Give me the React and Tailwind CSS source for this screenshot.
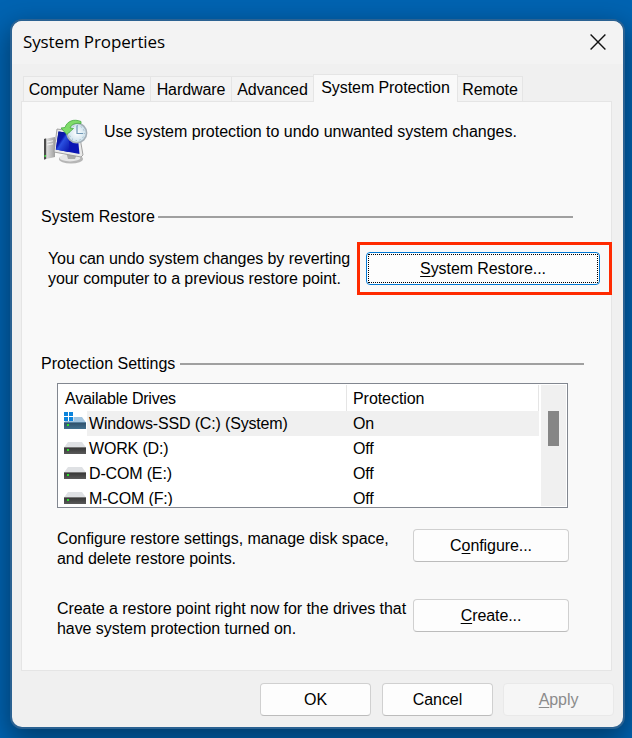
const TABS = [
  { name: "Computer Name", width: "w-[127px]" },
  { name: "Hardware", width: "w-[81px]" },
  { name: "Advanced", width: "w-[82px]" },
  { name: "System Protection", width: "w-[145px]", active: true },
  { name: "Remote", width: "w-[65px]" },
];

const DRIVES = [
  { name: "Windows-SSD (C:) (System)", protection: "On", system: true },
  { name: "WORK (D:)", protection: "Off" },
  { name: "D-COM (E:)", protection: "Off" },
  { name: "M-COM (F:)", protection: "Off" },
];

const CloseIcon = () => (
  <svg width="16" height="16" viewBox="0 0 16 16" fill="none" stroke="#111" strokeWidth="1.4">
    <path d="M0.6 0.6L15.4 15.4M15.4 0.6L0.6 15.4" />
  </svg>
);

const DriveIcon = ({ system }) => (
  <svg width="22" height="25" viewBox="0 0 22 25">
    <defs>
      <linearGradient id="driveDark" x1="0" y1="0" x2="0" y2="1">
        <stop offset="0" stopColor="#333333" />
        <stop offset="1" stopColor="#5a5a5a" />
      </linearGradient>
      <linearGradient id="driveBlue" x1="0" y1="0" x2="0" y2="1">
        <stop offset="0" stopColor="#2c4c66" />
        <stop offset="1" stopColor="#41708f" />
      </linearGradient>
    </defs>
    <path d="M4 6H18L22 11.5H0Z" fill={system ? "#a3c4de" : "#dfe1e4"} />
    <rect y="11" width="22" height="7" fill={system ? "url(#driveBlue)" : "url(#driveDark)"} />
    <rect y="11" width="22" height="1" fill={system ? "#55809f" : "#777777"} />
    <rect x="3" y="13" width="2" height="2" fill="#2be22b" />
    {system && (
      <g>
        <rect width="9.5" height="10" fill="#ffffff" />
        <path d="M0 1H4V5H0ZM5 1H9V5H5ZM0 6H4V10H0ZM5 6H9V10H5Z" fill="#0c84dc" />
      </g>
    )}
  </svg>
);

const RestoreIcon = () => (
  <svg width="46" height="46" viewBox="0 0 46 46">
    <defs>
      <linearGradient id="screen" x1="0" y1="0" x2="1" y2="1">
        <stop offset="0" stopColor="#0a1890" />
        <stop offset="0.4" stopColor="#0a18b0" />
        <stop offset="0.5" stopColor="#2a50e0" />
        <stop offset="1" stopColor="#0713a8" />
      </linearGradient>
      <linearGradient id="tower" x1="0" y1="0" x2="1" y2="0">
        <stop offset="0" stopColor="#777777" />
        <stop offset="0.3" stopColor="#d8d8d8" />
        <stop offset="1" stopColor="#a0a0a0" />
      </linearGradient>
      <radialGradient id="clock">
        <stop offset="0" stopColor="#ffffff" />
        <stop offset="1" stopColor="#c9dfeb" />
      </radialGradient>
    </defs>
    {/* tower */}
    <path d="M1 20L12 18V38L1 40.5Z" fill="url(#tower)" />
    <path d="M1 20L3 19.6V40L1 40.5Z" fill="#4c4c4c" />
    <path d="M4 23L10 21.8M4 26L10 24.8" stroke="#f2f2f2" />
    <path d="M1.5 36H3V38H1.5Z" fill="#42d642" />
    {/* stand */}
    <ellipse cx="28" cy="40" rx="12" ry="4.6" fill="#b6b6b6" />
    <ellipse cx="27" cy="38.8" rx="10.5" ry="3.6" fill="#e6e6e6" />
    <path d="M23 33L34 35L32 40L25 40Z" fill="#a9a9a9" />
    {/* monitor */}
    <path d="M14 10L36 13L40 36L38 38L11 33Z" fill="#e9e9e9" stroke="#999999" strokeWidth="0.9" />
    <path d="M15.5 12.5L34.5 15L36.5 35L12.8 30.5Z" fill="#0a14b4" />
    <path d="M15.5 12.5L22 13.4C25.5 18 27.5 24 25.5 32.9L12.8 30.5Z" fill="url(#screen)" />
    {/* clock */}
    <circle cx="33.8" cy="14" r="9.8" fill="url(#clock)" stroke="#a5b0b8" strokeWidth="1.6" />
    <circle cx="33.8" cy="14" r="7.5" fill="none" stroke="#8fa9bb" strokeWidth="1" strokeDasharray="1 2.93" />
    <path d="M34 6.5V14.5H40" fill="none" stroke="#6f98b6" strokeWidth="1.2" />
    {/* arrow */}
    <path d="M38 2.5C31 -0.5 24 2 22 8.5L18 9L23.8 15.5L30.5 9.5L27 9C28.5 5.5 32 3.6 38 4.6Z" fill="#7fdc6a" stroke="#48a944" strokeWidth="0.8" />
  </svg>
);

function Button({ label, hotkey, className = "", disabled }) {
  const i = hotkey ? label.indexOf(hotkey) : -1;

  return (
    <button
      disabled={disabled}
      className={`flex h-[33px] shrink-0 items-center justify-center rounded border pt-px tracking-[-0.08px] ${
        disabled ? "border-[#e9e9e9] bg-[#f6f6f6] text-[#8b8b8b]" : "border-[#d0d0d0] border-b-[#bcbcbc] bg-[#fdfdfd] text-black"
      } ${className}`}
    >
      {i < 0 ? (
        label
      ) : (
        <span>
          {label.slice(0, i)}
          <span className="underline decoration-1 underline-offset-2">{hotkey}</span>
          {label.slice(i + 1)}
        </span>
      )}
    </button>
  );
}

function GroupTitle({ title, width, className = "" }) {
  return (
    <div className={`flex h-5 items-center ${className}`}>
      <h2 className={`shrink-0 ${width}`}>{title}</h2>
      <div className="h-[2px] grow bg-[#a0a0a0]" />
    </div>
  );
}

function DriveList() {
  return (
    <div className="mt-[9px] ml-[35px] flex h-[125px] w-[511px] border border-[#828790] bg-white p-px">
      <div className="w-[480px] overflow-hidden">
        <div className="flex h-[26px] leading-[28px]">
          <div className="w-[288px] border-r border-[#e5e5e5] pl-[6px] tracking-[-0.22px]">Available Drives</div>
          <div className="w-[192px] border-r border-[#e5e5e5] pl-[6px] tracking-[-0.06px]">Protection</div>
        </div>
        {DRIVES.map((drive) => (
          <div key={drive.name} className="flex h-[25px] pl-[5px] leading-[25px] tracking-[-0.16px]">
            <DriveIcon system={drive.system} />
            <div className={`ml-px flex grow ${drive.system ? "bg-[#f0f0f0]" : ""}`}>
              <div className="w-[266px] pl-[2px]">{drive.name}</div>
              <div>{drive.protection}</div>
            </div>
          </div>
        ))}
      </div>
      <div className="ml-[2px] w-[25px] bg-[#f0f0f0] pt-[26px] pl-[7px]">
        <div className="h-[35px] w-[11px] bg-[#868686]" />
      </div>
    </div>
  );
}

export default function App() {
  return (
    <div className="h-[738px] w-[632px] overflow-hidden bg-[#0063b1] pt-[21px] pl-[12px] font-['Liberation_Sans',Arial,sans-serif] text-[16px] leading-5 text-black">
      <div className="flex h-[706px] w-[611px] flex-col rounded-[10px] bg-[#f0f0f0] shadow-[0_0_0_2px_#2b6292,0_10px_28px_4px_rgba(0,0,0,0.4)]">
        {/* TITLE BAR */}
        <div className="flex h-[43px] shrink-0 items-center justify-between rounded-t-[10px] bg-[#f3f3f3] pr-[17px] pb-px pl-[11px]">
          <h1 className="font-['Open_Sans',sans-serif] text-[17px] tracking-[-0.12px]">System Properties</h1>
          <CloseIcon />
        </div>

        {/* TABS */}
        <div className="mt-[10px] flex h-[28px] shrink-0 items-end pl-[11px] tracking-[-0.08px]">
          {TABS.map((tab) => (
            <div
              key={tab.name}
              className={`shrink-0 border-t border-l border-[#e5e5e5] text-center last:border-r last:border-l-0 ${tab.width} ${
                tab.active ? "relative h-[28px] border-r bg-[#f9f9f9] pt-[3px]" : "mb-px h-[25px] bg-[#f3f3f3] pt-[3px]"
              }`}
            >
              {tab.name}
            </div>
          ))}
        </div>

        {/* TAB PANEL */}
        <div className="-mt-px ml-[9px] h-[570px] w-[591px] shrink-0 border border-[#e5e5e5] bg-[#f9f9f9]">
          <div className="mt-[17px] flex h-[46px] pl-[21px]">
            <RestoreIcon />
            <p className="mt-[3px] ml-[15px] tracking-[-0.03px]">Use system protection to undo unwanted system changes.</p>
          </div>

          <GroupTitle title="System Restore" width="w-[117px]" className="mt-[42px] ml-[19px] w-[532px]" />
          <div className="mt-[15px] flex pl-[26px]">
            <p className="mt-[7px] w-[309px] shrink-0 tracking-[-0.08px]">
              You can undo system changes by reverting
              <br />
              your computer to a previous restore point.
            </p>
            <div className="h-[53px] w-[255px] shrink-0 border-3 border-[#ff2a00] pt-[7px] pl-[6px]">
              <div className="h-[33px] w-[234px] rounded border border-[#0078d4] bg-[#fdfdfd] p-px">
                <button className="flex h-full w-full items-center justify-center border border-dotted border-black pt-px tracking-[-0.08px]">
                  <span>
                    <span className="underline decoration-1 underline-offset-2">S</span>ystem Restore...
                  </span>
                </button>
              </div>
            </div>
          </div>

          <GroupTitle title="Protection Settings" width="w-[139px]" className="mt-[59px] ml-[19px] w-[543px]" />
          <DriveList />

          <div className="mt-[21px] flex pl-[35px] tracking-[-0.06px]">
            <p className="w-[356px]">
              Configure restore settings, manage disk space,
              <br />
              and delete restore points.
            </p>
            <Button label="Configure..." hotkey="o" className="w-[156px]" />
          </div>
          <div className="mt-[30px] flex pl-[35px] tracking-[-0.06px]">
            <p className="w-[356px]">
              Create a restore point right now for the drives that
              <br />
              have system protection turned on.
            </p>
            <Button label="Create..." hotkey="C" className="w-[156px]" />
          </div>
        </div>

        {/* FOOTER */}
        <div className="mt-[12px] flex gap-[11px] pl-[248px]">
          <Button label="OK" className="w-[111px]" />
          <Button label="Cancel" className="w-[111px]" />
          <Button label="Apply" hotkey="A" className="-ml-px w-[111px]" disabled />
        </div>
      </div>
    </div>
  );
}
